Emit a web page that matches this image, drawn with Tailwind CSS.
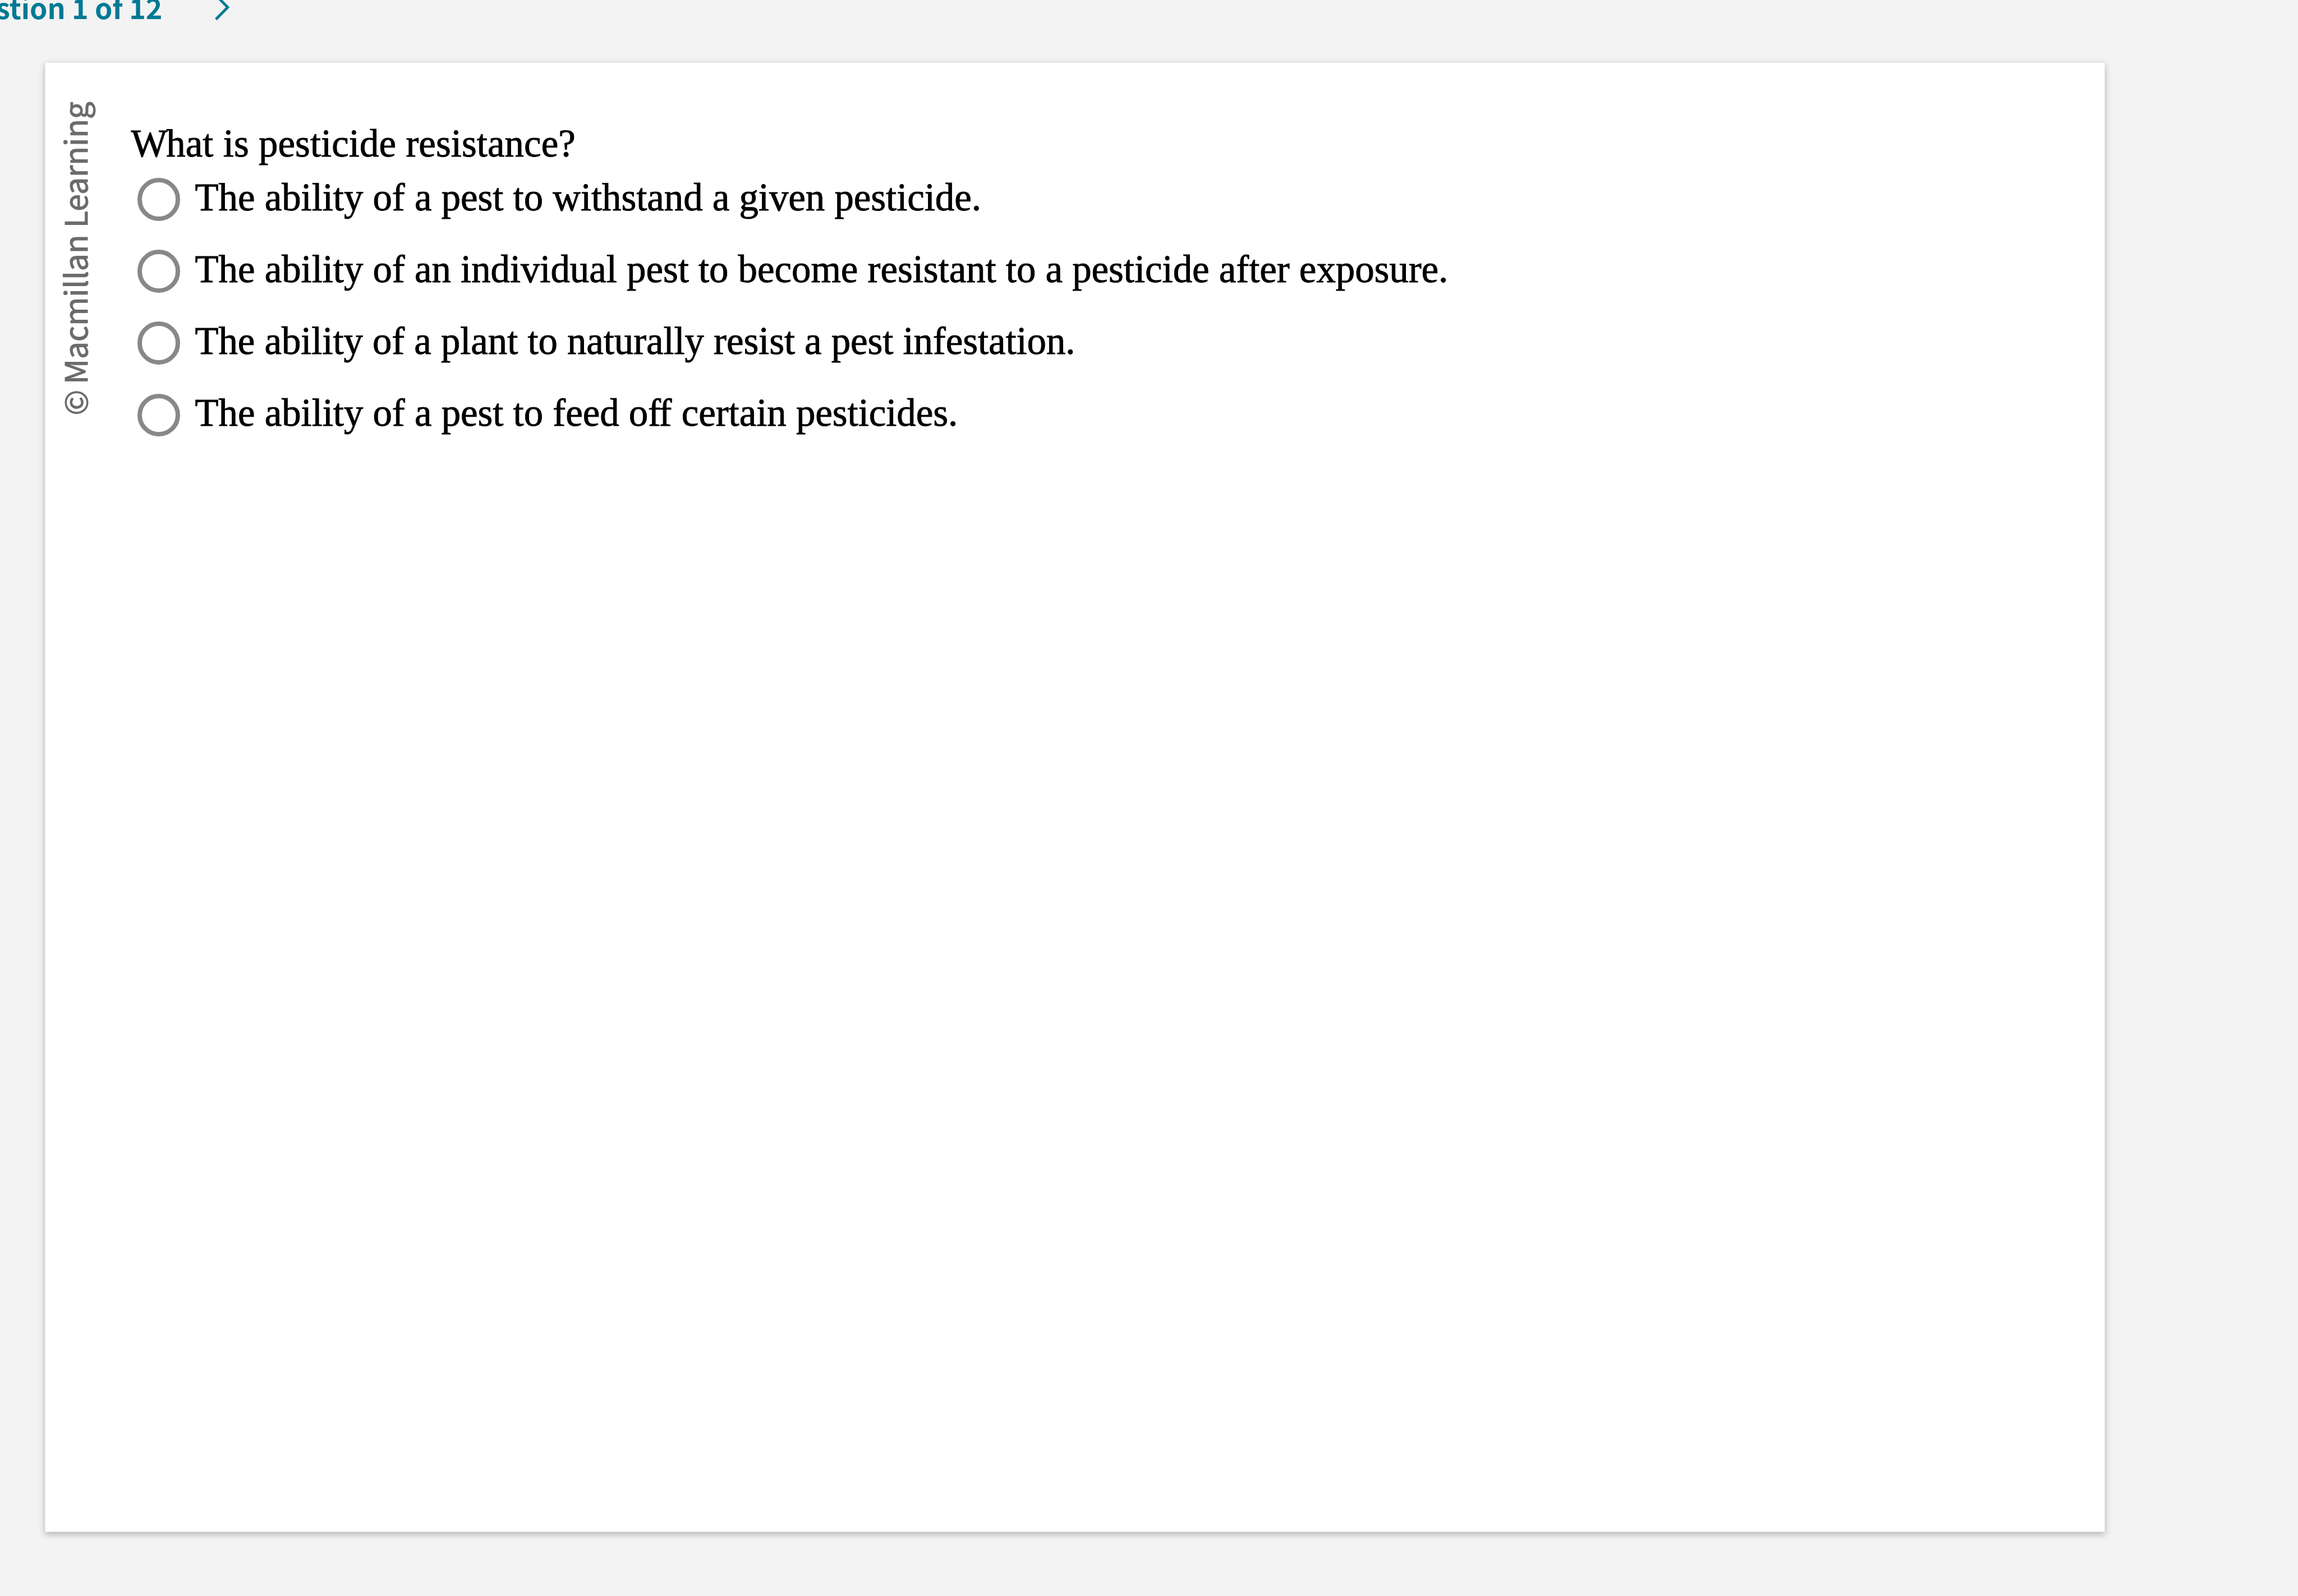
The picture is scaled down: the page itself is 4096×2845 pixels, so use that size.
<!DOCTYPE html>
<html lang="en">
<head>
<meta charset="utf-8">
<title>Question 1 of 12</title>
<script src="https://cdn.jsdelivr.net/npm/@tailwindcss/browser@4"></script>
</head>
<body class="bg-[#f3f3f3] overflow-hidden w-[4096px] h-[2845px] text-black">
<div class="w-[4096px] h-[2845px] overflow-hidden flex flex-col">
  <header class="-mt-[17px] mb-[68px] h-[60px] shrink-0 flex items-center -ml-[106.8px] text-[#007a94] font-['Noto_Sans_CJK_SC',sans-serif]">
    <h1 class="-mt-[2px] text-[50.2px] leading-[60px] font-bold whitespace-pre">Question 1 of 12</h1>
    <svg class="ml-[93.4px] w-[28px] h-[54px]" viewBox="0 0 28 54" fill="none" stroke="currentColor" stroke-width="4.8"><path d="M1.8 5.5L22.9 27L1.8 48.5"/></svg>
  </header>
  <main class="ml-[80px] w-[3672px] h-[2620px] shrink-0 bg-white border border-[#ececec] shadow-[0_4px_11px_rgba(0,0,0,0.27)] flex items-start">
    <div class="w-[152.6px] shrink-0 pt-[69px] pl-[19px]">
      <div class="[writing-mode:vertical-rl] [text-orientation:sideways] rotate-180 text-[55.2px] leading-[64px] whitespace-nowrap text-[#6b6b6b] [-webkit-text-stroke:1px_#6b6b6b] font-['Noto_Sans_CJK_SC',sans-serif]"><span class="tracking-[-2.5px]">©</span> Macmillan Learning</div>
    </div>
    <section class="pt-[113px] text-[68.75px] [-webkit-text-stroke:0.9px_#000] font-['Liberation_Serif',serif] whitespace-nowrap">
      <p class="leading-[62.5px] tracking-[0.085px]"><span class="tracking-[-2.3px]">W</span>hat is pesticide resistance?</p>
      <ul class="ml-[11.2px]">
        <li class="h-[128.1px] flex items-center gap-[26.2px]"><span class="mt-2 size-[76.6px] rounded-full border-8 border-[#888]"></span><span class="mt-px leading-none">The ability of a pest to withstand a given pesticide.</span></li>
        <li class="h-[128.1px] flex items-center gap-[26.2px]"><span class="mt-2 size-[76.6px] rounded-full border-8 border-[#888]"></span><span class="mt-px leading-none">The ability of an individual pest to become resistant to a pesticide after exposure.</span></li>
        <li class="h-[128.1px] flex items-center gap-[26.2px]"><span class="mt-2 size-[76.6px] rounded-full border-8 border-[#888]"></span><span class="mt-px leading-none tracking-[-0.04px]">The ability of a plant to naturally resist a pest infestation.</span></li>
        <li class="h-[128.1px] flex items-center gap-[26.2px]"><span class="mt-2 size-[76.6px] rounded-full border-8 border-[#888]"></span><span class="mt-px leading-none">The ability of a pest to feed o<span class="tracking-[-3.4px]">f</span>f certain pesticides.</span></li>
      </ul>
    </section>
  </main>
</div>
</body>
</html>
